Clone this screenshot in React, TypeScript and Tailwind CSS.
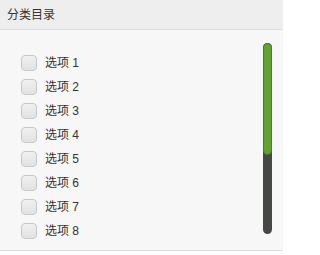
const items = ['选项 1', '选项 2', '选项 3', '选项 4', '选项 5', '选项 6', '选项 7', '选项 8'];

export default function App() {
  return (
    <div className="w-[286px] h-[255px] bg-white font-['Liberation_Sans','Noto_Sans_CJK_SC',sans-serif]">
      <div className="w-[283px] h-[251px] flex flex-col border-b border-[#dcdcdc] bg-[#f7f7f7]">
        <div className="h-[30px] flex items-center pl-[7px] bg-[#eeeeee] border-b border-[#dddddd] text-[12px] text-[#333]">
          分类目录
        </div>
        <div className="flex flex-1">
          <ul className="flex-1 flex flex-col pt-[21px] pl-[21px]">
            {items.map((label) => (
              <li key={label} className="h-6 flex items-center gap-[8px]">
                <span className="w-[16px] h-[16px] rounded-[4px] border border-[#c8c8c8] bg-gradient-to-b from-[#f0f0f0] to-[#e2e2e2]" />
                <span className="text-[12px] text-[#333]">{label}</span>
              </li>
            ))}
          </ul>
          <div className="mt-[13px] mr-[11px] w-[9px] h-[191px] flex flex-col rounded-full overflow-hidden bg-[#454845]">
            <div className="h-[112px] rounded-full bg-[#62a134] border border-[#4a7d27]" />
          </div>
        </div>
      </div>
    </div>
  );
}
